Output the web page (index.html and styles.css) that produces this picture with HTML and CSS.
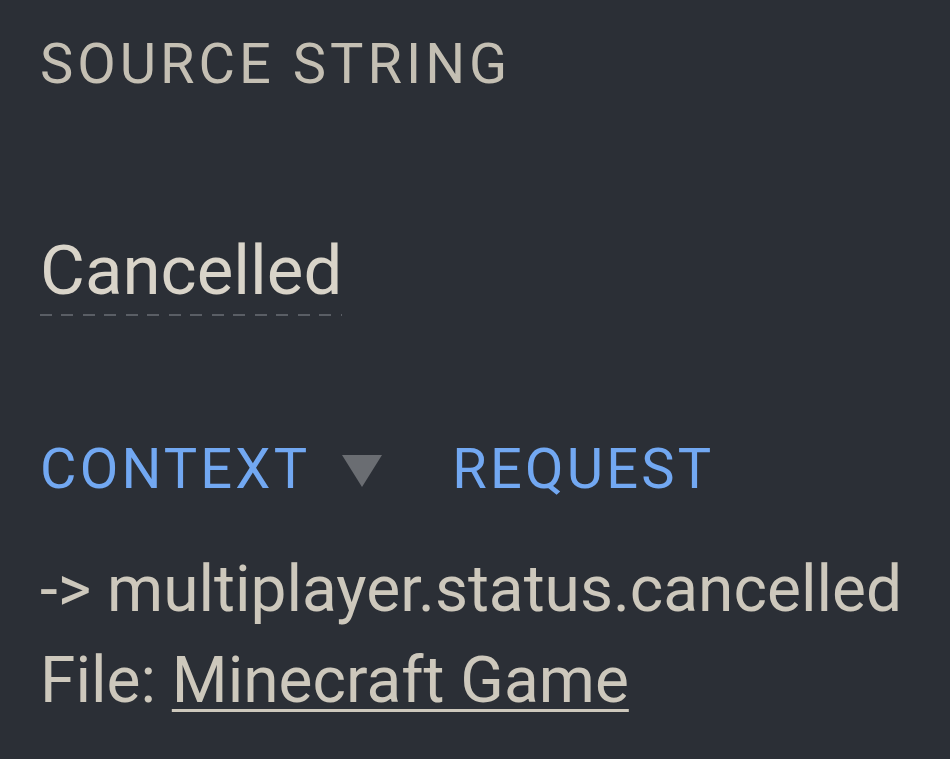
FILE: index.html
```html
<!DOCTYPE html>
<html>
<head>
<meta charset="utf-8">
<link rel="stylesheet" href="styles.css">
</head>
<body>
<div class="panel">
  <div class="label">SOURCE STRING</div>
  <div class="source"><span class="source-text">Cancelled</span></div>
  <div class="tabs">
    <span class="tab">CONTEXT</span>
    <svg class="caret" width="40" height="32" viewBox="0 0 40 32"><polygon points="0,0 40,0 20,32" fill="#6a6d72"/></svg>
    <span class="tab">REQUEST</span>
  </div>
  <div class="line">-&gt; multiplayer.status.cancelled</div>
  <div class="line">File: <a class="file-link" href="#">Minecraft Game</a></div>
</div>
</body>
</html>
```
FILE: styles.css
```css
html, body {
  margin: 0;
  padding: 0;
  background: #2b2f36;
  height: 100%;
}
.panel {
  padding: 32px 0 0 40px;
  font-family: Roboto, "Liberation Sans", sans-serif;
  color: #cdc8bc;
}
.label {
  font-size: 56px;
  line-height: 64px;
  letter-spacing: 4px;
  color: #c4bfb3;
}
.source {
  display: flex;
  margin-top: 135px;
}
.source-text {
  font-size: 69px;
  line-height: 80px;
  padding-bottom: 5px;
  color: #d9d4c9;
  background: repeating-linear-gradient(90deg, #5a5e65 0 12px, transparent 12px 21.5px) left bottom / 100% 2px no-repeat;
}
.tabs {
  display: flex;
  align-items: flex-start;
  margin-top: 121px;
  height: 64px;
}
.tab {
  font-size: 56px;
  line-height: 64px;
  letter-spacing: 3.2px;
  color: #72a8f2;
}
.caret {
  margin: 18px 70px 0 32px;
}
.line {
  font-size: 64px;
  line-height: 91px;
}
.tabs + .line {
  margin-top: 43px;
}
.file-link {
  color: inherit;
  text-decoration: underline;
  text-decoration-thickness: 3px;
  text-underline-offset: 7px;
}
```
